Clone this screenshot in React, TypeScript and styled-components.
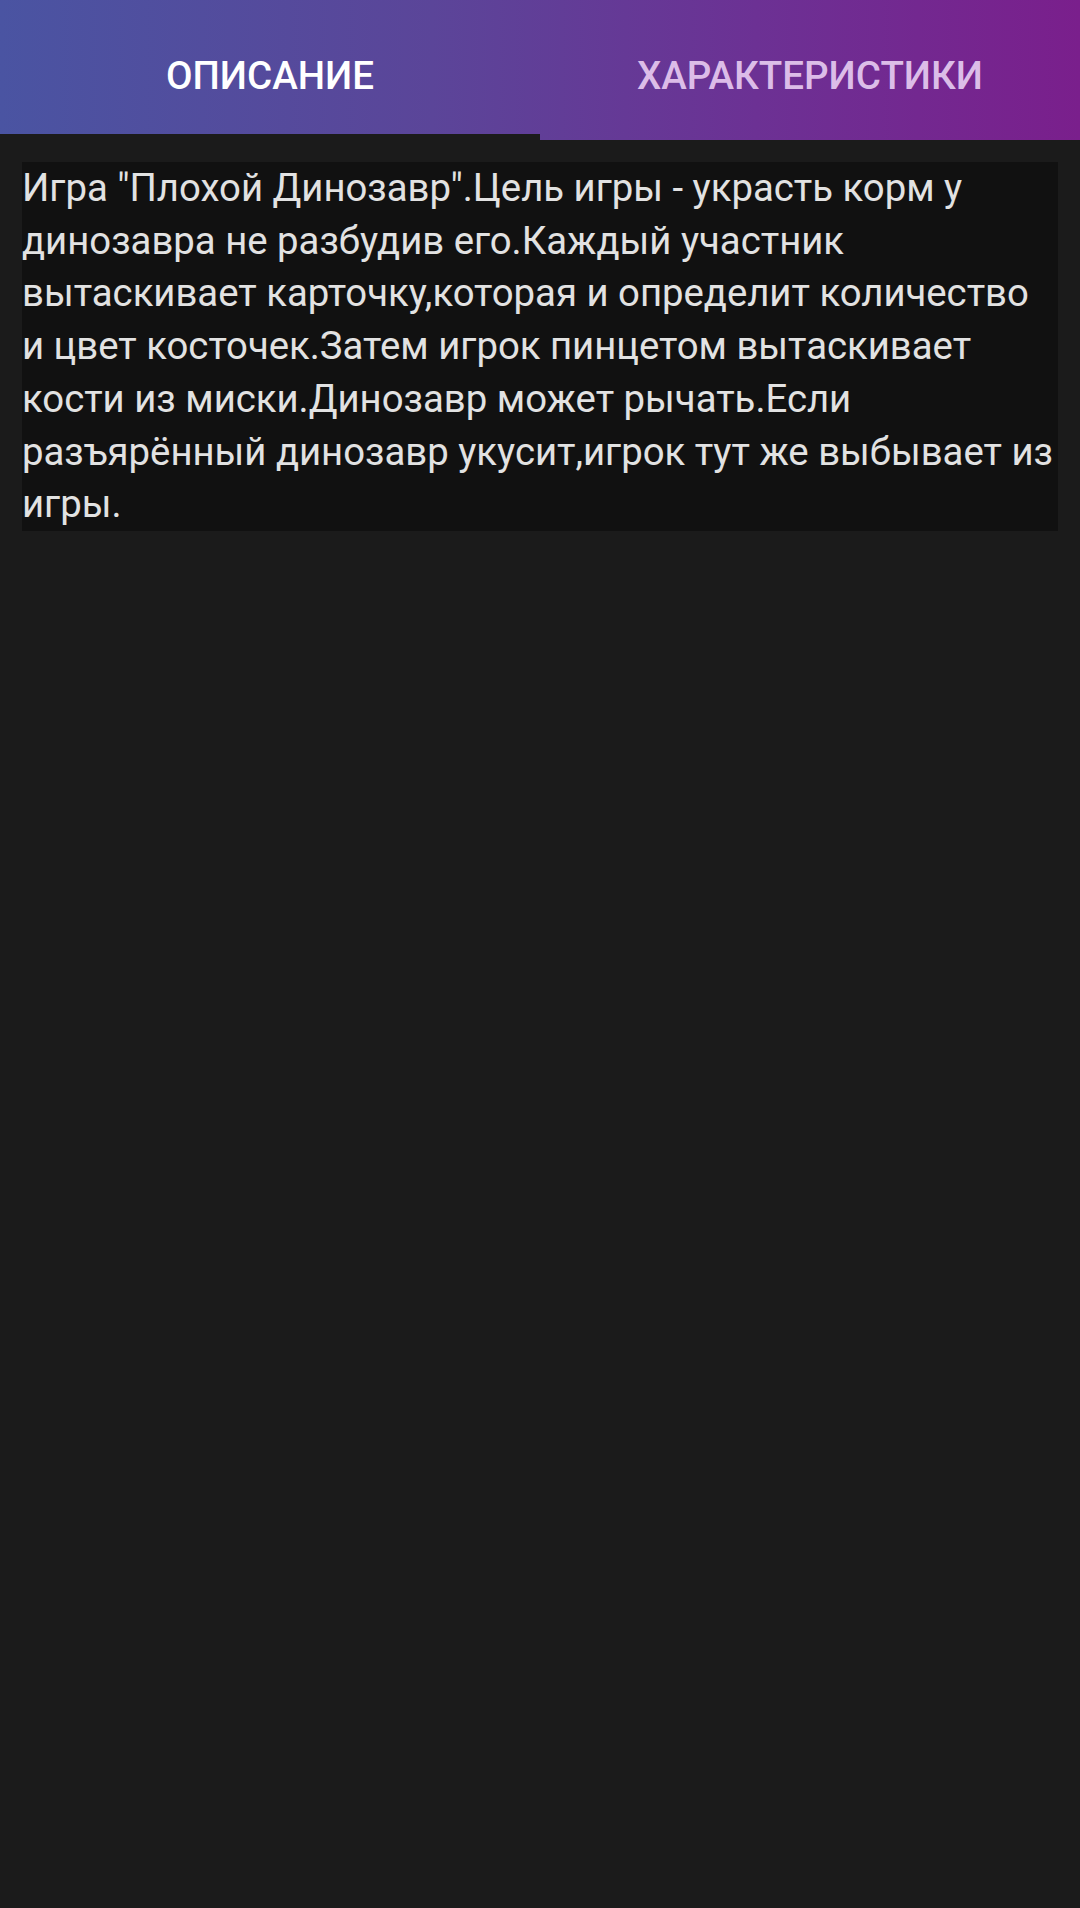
import React, { useState } from "react";
import styled, { createGlobalStyle } from "styled-components";

const GlobalStyle = createGlobalStyle`
    html, body {
        margin: 0;
        padding: 0;
        background: #1b1b1b;
    }
    body {
        font-family: Roboto, "Liberation Sans", sans-serif;
    }
`;

const Page = styled.div`
    min-height: 1908px;
    background: #1b1b1b;
`;

const TabBar = styled.div`
    display: flex;
    height: 140px;
    background: linear-gradient(90deg, #4a54a2 0%, #5b4599 40%, #6c3194 70%, #7a1f8c 100%);
`;

const Tab = styled.button<{ $active: boolean }>`
    flex: 1;
    display: flex;
    align-items: center;
    justify-content: center;
    padding: 17px 0 0;
    border: none;
    background: transparent;
    border-bottom: 6px solid ${p => (p.$active ? "#1b1b1b" : "transparent")};
    color: ${p => (p.$active ? "#ffffff" : "#dcbde8")};
    font-family: Roboto, "Liberation Sans", sans-serif;
    font-size: 38.5px;
    font-weight: 500;
    text-transform: uppercase;
    cursor: pointer;
`;

const Content = styled.div`
    padding: 22px 22px;
`;

const Description = styled.p`
    margin: 0;
    background: #111111;
    color: #e2e2e2;
    font-size: 38.3px;
    line-height: 52.7px;
`;

const text =
    'Игра "Плохой Динозавр".Цель игры - украсть корм у динозавра не разбудив его.Каждый участник вытаскивает карточку,которая и определит количество и цвет косточек.Затем игрок пинцетом вытаскивает кости из миски.Динозавр может рычать.Если разъярённый динозавр укусит,игрок тут же выбывает из игры.';

export default function App() {
    const [tab, setTab] = useState(0);
    return (
        <Page>
            <GlobalStyle />
            <TabBar>
                <Tab $active={tab === 0} onClick={() => setTab(0)}>Описание</Tab>
                <Tab $active={tab === 1} onClick={() => setTab(1)}>Характеристики</Tab>
            </TabBar>
            <Content>
                {tab === 0 ? <Description>{text}</Description> : null}
            </Content>
        </Page>
    );
}
